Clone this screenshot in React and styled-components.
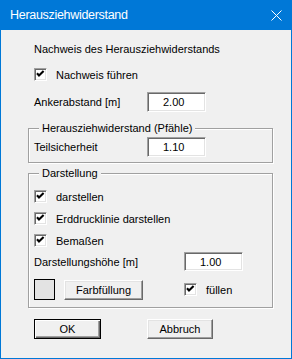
import React from "react";
import styled, { createGlobalStyle } from "styled-components";

const GlobalStyle = createGlobalStyle`
  html, body {
    margin: 0;
    padding: 0;
    background: #f0f0f0;
  }
  body {
    font-family: "Liberation Sans", Arial, sans-serif;
    font-size: 11px;
    color: #000;
  }
`;

const Window = styled.div`
  width: 292px;
  height: 359px;
  box-sizing: border-box;
  background: #f0f0f0;
  border: 1px solid #0078d7;
  border-top: 0;
  display: flex;
  flex-direction: column;
`;

const TitleBar = styled.div`
  height: 30px;
  margin: 0 -1px;
  background: #0078d7;
  color: #fff;
  display: flex;
  align-items: center;
  justify-content: space-between;
  padding: 0 10px 0 10px;
  font-size: 12.5px;
  letter-spacing: -0.3px;
`;

const CloseIcon = styled.svg`
  width: 11px;
  height: 11px;
  margin-top: 1px;
`;

const Body = styled.div`
  display: flex;
  flex-direction: column;
  padding-left: 27px;
`;

const Row = styled.div`
  display: flex;
  align-items: center;
  height: ${(p) => p.$h || 14}px;
  margin-top: ${(p) => p.$mt || 0}px;
  padding-left: ${(p) => (p.$inset ? 0 : 6)}px;
`;

const Label = styled.span`
  width: ${(p) => p.$w}px;
  flex: none;
  white-space: nowrap;
`;

const Field = styled.div`
  width: ${(p) => p.$w || 59}px;
  height: ${(p) => p.$h || 20}px;
  box-sizing: border-box;
  background: #fff;
  border: 1px solid;
  border-color: #a0a0a0 #fff #fff #a0a0a0;
  box-shadow: inset 1px 1px 0 #696969, inset -1px -1px 0 #e3e3e3;
  display: flex;
  align-items: center;
  padding-left: 15px;
`;

const CheckBox = styled.span`
  width: 13px;
  height: 13px;
  box-sizing: border-box;
  flex: none;
  background: #fff;
  border: 1px solid;
  border-color: #a0a0a0 #fff #fff #a0a0a0;
  box-shadow: inset 1px 1px 0 #696969, inset -1px -1px 0 #e3e3e3;
  display: flex;
  align-items: center;
  justify-content: center;
  margin-right: 9px;
`;

const Group = styled.div`
  position: relative;
  width: 245px;
  box-sizing: border-box;
  margin-top: ${(p) => p.$mt}px;
  border: 1px solid #a0a0a0;
  box-shadow: 1px 1px 0 #fff, inset 1px 1px 0 #fff;
  padding: ${(p) => p.$pt}px 0 ${(p) => p.$pb}px 5px;
  display: flex;
  flex-direction: column;
`;

const Legend = styled.span`
  position: absolute;
  top: -8px;
  left: 10px;
  padding: 0 3px;
  background: #f0f0f0;
  line-height: 14px;
`;

const Swatch = styled.div`
  width: 21px;
  height: 21px;
  box-sizing: border-box;
  border: 1px solid #000;
  background: #e3e3e3;
  margin-right: 9px;
`;

const Button = styled.button`
  width: ${(p) => p.$w}px;
  height: 20px;
  box-sizing: border-box;
  margin: 0 ${(p) => p.$mr || 0}px 0 0;
  padding: 0;
  font: inherit;
  color: #000;
  background: #f0f0f0;
  border: 1px solid;
  border-color: ${(p) =>
    p.$default ? "#000" : "#fff #696969 #696969 #fff"};
  box-shadow: ${(p) =>
    p.$default
      ? "inset 1px 1px 0 #fff, inset -1px -1px 0 #696969, inset -2px -2px 0 #a0a0a0"
      : "inset -1px -1px 0 #a0a0a0, inset 1px 1px 0 #e3e3e3"};
`;

const Spacer = styled.div`
  flex: 0 0 ${(p) => p.$w}px;
`;

function Check() {
  return (
    <CheckBox>
      <svg width="9" height="9" viewBox="0 0 9 9">
        <path d="M1 3.2 L3 5.4 L7.6 0.9" fill="none" stroke="#000" strokeWidth="2.1" />
      </svg>
    </CheckBox>
  );
}

export default function App() {
  return (
    <>
      <GlobalStyle />
      <Window>
        <TitleBar>
          <span>Herausziehwiderstand</span>
          <CloseIcon viewBox="0 0 11 11">
            <path d="M0.5 0.5 L10.5 10.5 M10.5 0.5 L0.5 10.5" stroke="#fff" strokeWidth="1" />
          </CloseIcon>
        </TitleBar>
        <Body>
          <Row $mt={12}>Nachweis des Herausziehwiderstands</Row>
          <Row $mt={12} $h={13}>
            <Check />
            Nachweis führen
          </Row>
          <Row $mt={11} $h={20}>
            <Label $w={113}>Ankerabstand [m]</Label>
            <Field>2.00</Field>
          </Row>
          <Group $mt={16} $pt={8} $pb={5}>
            <Legend>Herausziehwiderstand (Pfähle)</Legend>
            <Row $inset $h={20}>
              <Label $w={113}>Teilsicherheit</Label>
              <Field>1.10</Field>
            </Row>
          </Group>
          <Group $mt={10} $pt={16} $pb={7}>
            <Legend>Darstellung</Legend>
            <Row $inset $h={13}>
              <Check />
              darstellen
            </Row>
            <Row $inset $h={13} $mt={9}>
              <Check />
              Erddrucklinie darstellen
            </Row>
            <Row $inset $h={13} $mt={9}>
              <Check />
              Bemaßen
            </Row>
            <Row $inset $h={19} $mt={5}>
              <Label $w={150}>Darstellungshöhe [m]</Label>
              <Field $h={19}>1.00</Field>
            </Row>
            <Row $inset $h={21} $mt={8}>
              <Swatch />
              <Button $w={79}>Farbfüllung</Button>
              <Spacer $w={41} />
              <Check />
              füllen
            </Row>
          </Group>
          <Row $mt={11} $h={20}>
            <Button $w={67} $default $mr={46}>OK</Button>
            <Button $w={66}>Abbruch</Button>
          </Row>
        </Body>
      </Window>
    </>
  );
}
